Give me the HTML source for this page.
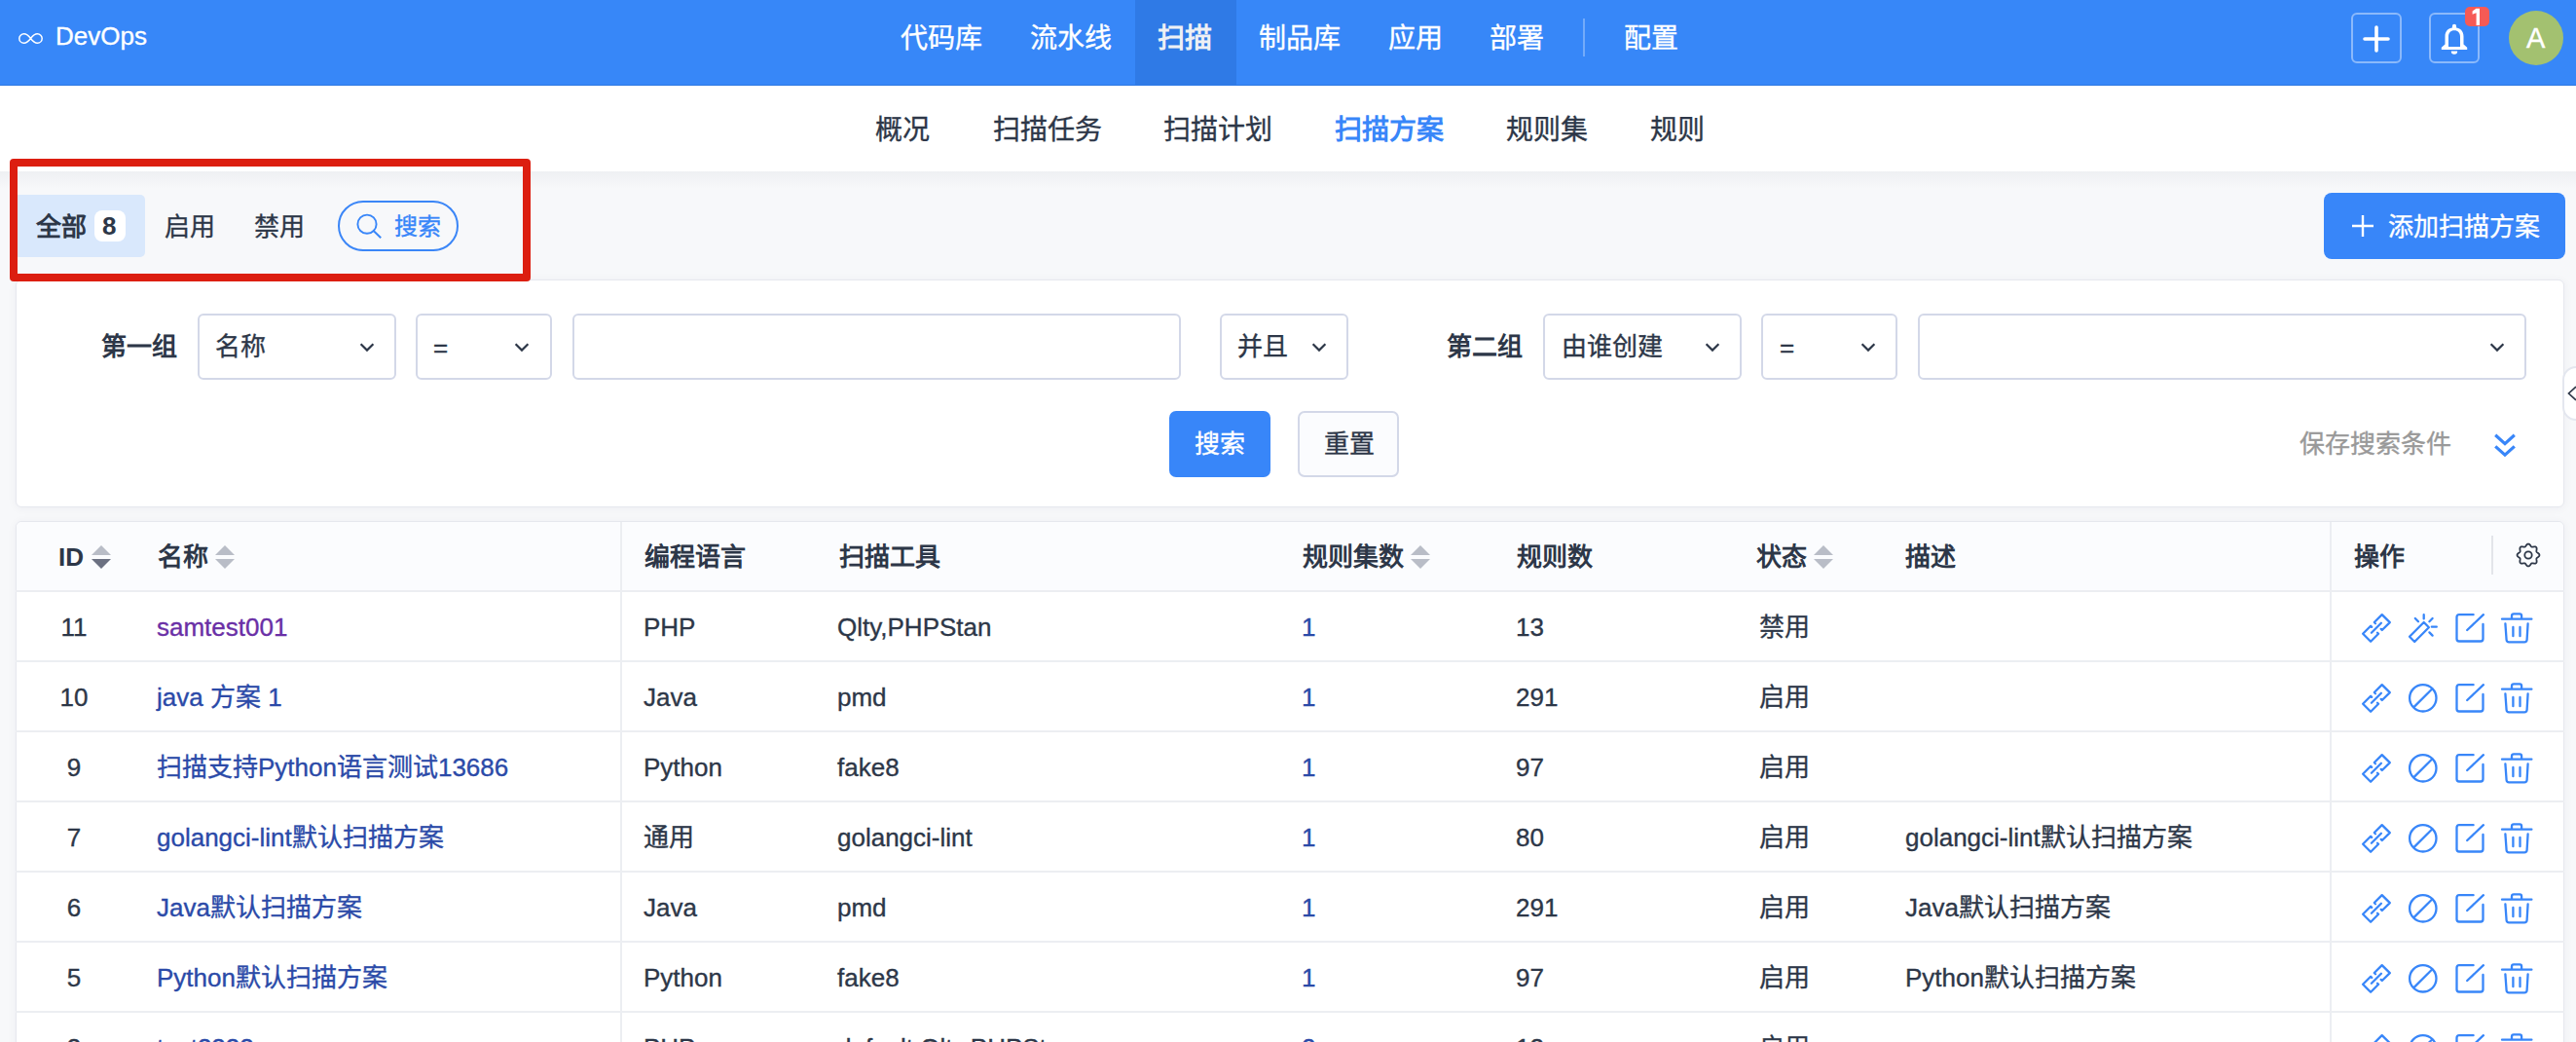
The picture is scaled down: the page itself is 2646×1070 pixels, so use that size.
<!DOCTYPE html>
<html lang="zh-CN">
<head>
<meta charset="utf-8">
<style>
*{box-sizing:border-box;margin:0;padding:0}
html,body{width:2646px;height:1070px;overflow:hidden}
body{position:relative;background:#f7f8fa;font-family:"Liberation Sans",sans-serif;color:#2d3748}
.a{position:absolute}
.t{position:absolute;white-space:nowrap;line-height:1;-webkit-text-stroke:0.35px currentColor}
svg{position:absolute;overflow:visible}
#hdr{left:0;top:0;width:2646px;height:88px;background:#3787f8;border-bottom:1px solid #2f79e2}
.nav{font-size:28px;color:#fff;top:26px}
#sub{left:0;top:88px;width:2646px;height:88px;background:#fff}
.snav{font-size:28px;color:#2d3748;top:120px}
#shadow{left:0;top:176px;width:2646px;height:18px;background:linear-gradient(#eef0f3,#f7f8fa)}
.f26{font-size:26px}
.card{background:#fff;border:1px solid #e6e8ee;border-radius:6px;box-shadow:0 1px 10px rgba(30,40,70,.05)}
.sel{background:#fff;border:2px solid #d3d8e8;border-radius:6px;top:322px;height:68px}
.lbl{font-size:26px;font-weight:bold;color:#2d3748;top:343px}
.stx{font-size:26px;color:#2d3748;top:343px}
.th{font-size:26px;font-weight:bold;color:#2d3748}
.td{font-size:26px;color:#2d3748}
.lk{color:#2b4aa8}
.hl{left:16px;width:2618px;height:2px;background:#eceef2}
.th,.lbl,.bd{-webkit-text-stroke:0}
</style>
</head>
<body>
<div id="hdr" class="a"></div>
<svg style="left:19px;top:34px" width="25" height="11" viewBox="0 0 25 11"><path d="M12.5 5.5 C10 2.2,7.8 0.8,5.6 0.8 A4.8 4.7 0 0 0 5.6 10.2 C7.8 10.2,10 8.8,12.5 5.5 C15 2.2,17.2 0.8,19.4 0.8 A4.8 4.7 0 0 1 19.4 10.2 C17.2 10.2,15 8.8,12.5 5.5Z" fill="none" stroke="#fff" stroke-width="1.5"/></svg>
<div class="t" style="left:57px;top:24px;font-size:26px;color:#fff">DevOps</div>
<div class="a" style="left:1166px;top:0;width:104px;height:88px;background:#2f7ae6"></div>
<div class="t nav" style="left:925px">代码库</div>
<div class="t nav" style="left:1058px">流水线</div>
<div class="t nav" style="left:1189px;color:#eef0f4;font-weight:bold;-webkit-text-stroke:0">扫描</div>
<div class="t nav" style="left:1293px">制品库</div>
<div class="t nav" style="left:1426px">应用</div>
<div class="t nav" style="left:1530px">部署</div>
<div class="t nav" style="left:1668px">配置</div>
<div class="a" style="left:1626px;top:19px;width:2px;height:39px;background:rgba(255,255,255,.3)"></div>
<div class="a" style="left:2415px;top:13px;width:52px;height:52px;border:2px solid rgba(255,255,255,.42);border-radius:6px"></div>
<svg style="left:2427px;top:26px" width="28" height="28" viewBox="0 0 28 28"><path d="M14 2V26M2 14H26" stroke="#fff" stroke-width="3.6" stroke-linecap="round"/></svg>
<div class="a" style="left:2495px;top:13px;width:52px;height:52px;border:2px solid rgba(255,255,255,.42);border-radius:6px"></div>
<svg style="left:2500px;top:20px" width="45" height="40" viewBox="0 0 45 40"><path fill="#fff" fill-rule="evenodd" d="M11.5 17.6C11.5 11.8 14.8 8.2 21 8.2C27.2 8.2 30.5 11.8 30.5 17.6V25.6L34.2 28.8V30.9H7.8V28.8L11.5 25.6Z M15 17.8C15 13.8 17.2 11.3 21 11.3C24.8 11.3 27 13.8 27 17.8V27.9H15Z"/><path fill="#fff" d="M18.9 9V6.9A2.1 2.1 0 0 1 23.1 6.9V9Z M17.8 32.6H24.2A3.2 3.2 0 0 1 17.8 32.6Z"/></svg>
<div class="a" style="left:2532px;top:7px;width:25px;height:20px;background:#f65a55;border-radius:5px"></div>
<svg style="left:2539px;top:8px" width="9" height="19" viewBox="0 0 9 19"><path d="M4.4 0.7H8V17.9H4.6V5.3L0.6 6.7V3.6Z" fill="#fff"/></svg>
<div class="a" style="left:2577px;top:11px;width:56px;height:56px;border-radius:50%;background:#a3c170"></div>
<div class="t" style="left:2595px;top:25px;font-size:29px;color:#fff">A</div>
<div id="sub" class="a"></div>
<div class="t snav" style="left:899px">概况</div>
<div class="t snav" style="left:1020px">扫描任务</div>
<div class="t snav" style="left:1195px">扫描计划</div>
<div class="t snav" style="left:1371px;color:#3886f9;font-weight:bold;-webkit-text-stroke:0">扫描方案</div>
<div class="t snav" style="left:1547px">规则集</div>
<div class="t snav" style="left:1695px">规则</div>
<div id="shadow" class="a"></div>
<div class="a" style="left:14px;top:200px;width:135px;height:64px;background:#d9e8fc;border-radius:5px"></div>
<div class="t f26" style="left:37px;top:220px;font-weight:bold;-webkit-text-stroke:0">全部</div>
<div class="a" style="left:97px;top:216px;width:32px;height:32px;background:#fff;border-radius:8px"></div>
<div class="t f26" style="left:105px;top:219px;font-weight:bold;-webkit-text-stroke:0">8</div>
<div class="t f26" style="left:169px;top:220px">启用</div>
<div class="t f26" style="left:261px;top:220px">禁用</div>
<div class="a" style="left:347px;top:206px;width:124px;height:52px;border:2px solid #3b86f7;border-radius:26px"></div>
<svg style="left:365px;top:219px" width="28" height="28" viewBox="0 0 28 28"><circle cx="12" cy="11.2" r="9.6" fill="none" stroke="#3886f9" stroke-width="1.9"/><path d="M18.9 18.2L25.5 24.6" stroke="#3886f9" stroke-width="2" stroke-linecap="square"/></svg>
<div class="t" style="left:405px;top:221px;font-size:24px;color:#3886f9">搜索</div>
<div class="a" style="left:2387px;top:198px;width:248px;height:68px;background:#3886f9;border-radius:8px"></div>
<svg style="left:2416px;top:221px" width="22" height="22" viewBox="0 0 22 22"><path d="M11 0V22M0 11H22" stroke="#fff" stroke-width="2.4"/></svg>
<div class="t f26" style="left:2453px;top:220px;color:#fff">添加扫描方案</div>
<div class="a card" style="left:16px;top:287px;width:2618px;height:234px"></div>
<div class="t lbl" style="left:104px">第一组</div>
<div class="a sel" style="left:203px;width:204px"></div>
<div class="t stx" style="left:221px">名称</div>
<svg style="left:369px;top:352px" width="16" height="10" viewBox="0 0 16 10"><path d="M1.6 1.2L8 7.6L14.4 1.2" fill="none" stroke="#2d3748" stroke-width="2.2" stroke-linejoin="miter"/></svg>
<div class="a sel" style="left:427px;width:140px"></div>
<div class="t stx" style="left:445px;top:344px">=</div>
<svg style="left:528px;top:352px" width="16" height="10" viewBox="0 0 16 10"><path d="M1.6 1.2L8 7.6L14.4 1.2" fill="none" stroke="#2d3748" stroke-width="2.2" stroke-linejoin="miter"/></svg>
<div class="a sel" style="left:588px;width:625px"></div>
<div class="a sel" style="left:1253px;width:132px"></div>
<div class="t stx" style="left:1271px">并且</div>
<svg style="left:1347px;top:352px" width="16" height="10" viewBox="0 0 16 10"><path d="M1.6 1.2L8 7.6L14.4 1.2" fill="none" stroke="#2d3748" stroke-width="2.2" stroke-linejoin="miter"/></svg>
<div class="t lbl" style="left:1486px">第二组</div>
<div class="a sel" style="left:1585px;width:204px"></div>
<div class="t stx" style="left:1604px">由谁创建</div>
<svg style="left:1751px;top:352px" width="16" height="10" viewBox="0 0 16 10"><path d="M1.6 1.2L8 7.6L14.4 1.2" fill="none" stroke="#2d3748" stroke-width="2.2" stroke-linejoin="miter"/></svg>
<div class="a sel" style="left:1809px;width:140px"></div>
<div class="t stx" style="left:1828px;top:344px">=</div>
<svg style="left:1911px;top:352px" width="16" height="10" viewBox="0 0 16 10"><path d="M1.6 1.2L8 7.6L14.4 1.2" fill="none" stroke="#2d3748" stroke-width="2.2" stroke-linejoin="miter"/></svg>
<div class="a sel" style="left:1970px;width:625px"></div>
<svg style="left:2557px;top:352px" width="16" height="10" viewBox="0 0 16 10"><path d="M1.6 1.2L8 7.6L14.4 1.2" fill="none" stroke="#2d3748" stroke-width="2.2" stroke-linejoin="miter"/></svg>
<div class="a" style="left:1201px;top:422px;width:104px;height:68px;background:#3886f9;border-radius:7px"></div>
<div class="t f26" style="left:1227px;top:443px;color:#fff">搜索</div>
<div class="a" style="left:1333px;top:422px;width:104px;height:68px;background:#fbfcfe;border:2px solid #d3d8e8;border-radius:7px"></div>
<div class="t f26" style="left:1360px;top:443px">重置</div>
<div class="t f26" style="left:2362px;top:443px;color:#999">保存搜索条件</div>
<svg style="left:2562px;top:445px" width="22" height="24" viewBox="0 0 22 24"><path d="M1.2 1.8L11 10.6L20.8 1.8M1.2 13.4L11 22.2L20.8 13.4" fill="none" stroke="#3886f9" stroke-width="3.2"/></svg>
<div class="a" style="left:2632px;top:376px;width:30px;height:56px;background:#fff;border:2px solid #e4e7ef;border-radius:14px"></div>
<svg style="left:2637px;top:396px" width="12" height="16" viewBox="0 0 12 16"><path d="M9 1L1.5 8L9 15" fill="none" stroke="#2d3748" stroke-width="1.7"/></svg>
<div class="a card" style="left:16px;top:535px;width:2618px;height:600px"></div>
<div class="a" style="left:17px;top:536px;width:2616px;height:70px;background:#fbfcfe;border-radius:6px 6px 0 0"></div>
<div class="a hl" style="top:606px"></div>
<div class="a hl" style="top:678px"></div>
<div class="a hl" style="top:750px"></div>
<div class="a hl" style="top:822px"></div>
<div class="a hl" style="top:894px"></div>
<div class="a hl" style="top:966px"></div>
<div class="a hl" style="top:1038px"></div>
<div class="a hl" style="top:1110px"></div>
<div class="a" style="left:637px;top:536px;width:2px;height:540px;background:#eceef2"></div>
<div class="a" style="left:2393px;top:536px;width:2px;height:540px;background:#eceef2"></div>
<div class="a" style="left:2559px;top:550px;width:2px;height:40px;background:#e3e5ea"></div>
<div class="t th" style="left:60px;top:559px">ID</div>
<svg style="left:94px;top:560px" width="20" height="24" viewBox="0 0 20 24"><path d="M10 0L20 10H0Z" fill="#b9bdc7"/><path d="M0 14H20L10 24Z" fill="#6b7081"/></svg>
<div class="t th" style="left:162px;top:559px">名称</div>
<svg style="left:221px;top:560px" width="20" height="24" viewBox="0 0 20 24"><path d="M10 0L20 10H0Z" fill="#b9bdc7"/><path d="M0 14H20L10 24Z" fill="#b9bdc7"/></svg>
<div class="t th" style="left:662px;top:559px">编程语言</div>
<div class="t th" style="left:862px;top:559px">扫描工具</div>
<div class="t th" style="left:1338px;top:559px">规则集数</div>
<svg style="left:1449px;top:560px" width="20" height="24" viewBox="0 0 20 24"><path d="M10 0L20 10H0Z" fill="#b9bdc7"/><path d="M0 14H20L10 24Z" fill="#b9bdc7"/></svg>
<div class="t th" style="left:1558px;top:559px">规则数</div>
<div class="t th" style="left:1804px;top:559px">状态</div>
<svg style="left:1863px;top:560px" width="20" height="24" viewBox="0 0 20 24"><path d="M10 0L20 10H0Z" fill="#b9bdc7"/><path d="M0 14H20L10 24Z" fill="#b9bdc7"/></svg>
<div class="t th" style="left:1957px;top:559px">描述</div>
<div class="t th" style="left:2418px;top:559px">操作</div>
<svg style="left:2584px;top:557px" width="26" height="26" viewBox="0 0 26 26" fill="none" stroke="#2d3748" stroke-width="1.8"><path d="M13.00 1.55 L13.45 1.62 L13.88 1.80 L14.29 2.10 L14.67 2.48 L15.01 2.90 L15.32 3.33 L15.61 3.74 L15.90 4.09 L16.19 4.36 L16.50 4.55 L16.85 4.64 L17.25 4.65 L17.70 4.60 L18.20 4.52 L18.72 4.44 L19.26 4.38 L19.80 4.38 L20.29 4.46 L20.73 4.63 L21.10 4.90 L21.37 5.27 L21.54 5.71 L21.62 6.20 L21.62 6.74 L21.56 7.28 L21.48 7.80 L21.40 8.30 L21.35 8.75 L21.36 9.15 L21.45 9.50 L21.64 9.81 L21.91 10.10 L22.26 10.39 L22.67 10.68 L23.10 10.99 L23.52 11.33 L23.90 11.71 L24.20 12.12 L24.38 12.55 L24.45 13.00 L24.38 13.45 L24.20 13.88 L23.90 14.29 L23.52 14.67 L23.10 15.01 L22.67 15.32 L22.26 15.61 L21.91 15.90 L21.64 16.19 L21.45 16.50 L21.36 16.85 L21.35 17.25 L21.40 17.70 L21.48 18.20 L21.56 18.72 L21.62 19.26 L21.62 19.80 L21.54 20.29 L21.37 20.73 L21.10 21.10 L20.73 21.37 L20.29 21.54 L19.80 21.62 L19.26 21.62 L18.72 21.56 L18.20 21.48 L17.70 21.40 L17.25 21.35 L16.85 21.36 L16.50 21.45 L16.19 21.64 L15.90 21.91 L15.61 22.26 L15.32 22.67 L15.01 23.10 L14.67 23.52 L14.29 23.90 L13.88 24.20 L13.45 24.38 L13.00 24.45 L12.55 24.38 L12.12 24.20 L11.71 23.90 L11.33 23.52 L10.99 23.10 L10.68 22.67 L10.39 22.26 L10.10 21.91 L9.81 21.64 L9.50 21.45 L9.15 21.36 L8.75 21.35 L8.30 21.40 L7.80 21.48 L7.28 21.56 L6.74 21.62 L6.20 21.62 L5.71 21.54 L5.27 21.37 L4.90 21.10 L4.63 20.73 L4.46 20.29 L4.38 19.80 L4.38 19.26 L4.44 18.72 L4.52 18.20 L4.60 17.70 L4.65 17.25 L4.64 16.85 L4.55 16.50 L4.36 16.19 L4.09 15.90 L3.74 15.61 L3.33 15.32 L2.90 15.01 L2.48 14.67 L2.10 14.29 L1.80 13.88 L1.62 13.45 L1.55 13.00 L1.62 12.55 L1.80 12.12 L2.10 11.71 L2.48 11.33 L2.90 10.99 L3.33 10.68 L3.74 10.39 L4.09 10.10 L4.36 9.81 L4.55 9.50 L4.64 9.15 L4.65 8.75 L4.60 8.30 L4.52 7.80 L4.44 7.28 L4.38 6.74 L4.38 6.20 L4.46 5.71 L4.63 5.27 L4.90 4.90 L5.27 4.63 L5.71 4.46 L6.20 4.38 L6.74 4.38 L7.28 4.44 L7.80 4.52 L8.30 4.60 L8.75 4.65 L9.15 4.64 L9.50 4.55 L9.81 4.36 L10.10 4.09 L10.39 3.74 L10.68 3.33 L10.99 2.90 L11.33 2.48 L11.71 2.10 L12.12 1.80 L12.55 1.62Z" stroke-linejoin="round"/><circle cx="13" cy="13" r="3.7"/></svg>
<div class="t td" style="left:36px;width:80px;text-align:center;top:631px">11</div>
<div class="t td" style="left:161px;top:631px;color:#6a2fa6">samtest001</div>
<div class="t td" style="left:661px;top:631px">PHP</div>
<div class="t td" style="left:860px;top:631px">Qlty,PHPStan</div>
<div class="t td lk" style="left:1337px;top:631px">1</div>
<div class="t td" style="left:1557px;top:631px">13</div>
<div class="t td" style="left:1807px;top:631px">禁用</div>
<svg style="left:2426px;top:630px" width="32" height="32" viewBox="0 0 32 32" fill="none" stroke="#3886f9" stroke-width="2.3" stroke-linecap="round" stroke-linejoin="round"><path d="M14 10.2L12.8 9L20.7 1.1L28.8 9.1L20.8 17L19.7 15.9M10.2 13.9L9.1 12.8L1.1 20.8L9.1 28.8L17.1 20.8L16 19.7M9.9 19.7L19.9 9.7"/></svg>
<svg style="left:2474px;top:630px" width="32" height="32" viewBox="0 0 32 32" fill="none" stroke="#3886f9" stroke-width="2.3" stroke-linecap="round" stroke-linejoin="round"><path d="M1 23.8L15.7 9L20.9 14.2L6.2 29Z M15.7 1.2V5.4 M6.8 5L10 8.2 M21.4 8.2L24.6 5 M23.8 13.7H28.8 M21.4 19.4L24.6 22.6"/></svg>
<svg style="left:2522px;top:630px" width="32" height="32" viewBox="0 0 32 32" fill="none" stroke="#3886f9" stroke-width="2.3" stroke-linecap="round" stroke-linejoin="round"><path d="M18.6 1.2H4Q1.5 1.2 1.5 3.7V26Q1.5 28.5 4 28.5H26Q28.5 28.5 28.5 26V11 M12.2 17L28.9 1.2"/></svg>
<svg style="left:2569px;top:629px" width="32" height="32" viewBox="0 0 32 32" fill="none" stroke="#3886f9" stroke-width="2.3" stroke-linecap="round" stroke-linejoin="round"><path d="M1 6.7H31.4 M11 6.7V3.4Q11 1.4 13 1.4H19.1Q21.1 1.4 21.1 3.4V6.7 M4.4 11.4L5.6 28Q5.8 30.4 8.2 30.4H24Q26.4 30.4 26.6 28L27.6 11.4 M12.4 15V24.2 M19.5 15V24.2"/></svg>
<div class="t td" style="left:36px;width:80px;text-align:center;top:703px">10</div>
<div class="t td" style="left:161px;top:703px;color:#2b4aa8">java 方案 1</div>
<div class="t td" style="left:661px;top:703px">Java</div>
<div class="t td" style="left:860px;top:703px">pmd</div>
<div class="t td lk" style="left:1337px;top:703px">1</div>
<div class="t td" style="left:1557px;top:703px">291</div>
<div class="t td" style="left:1807px;top:703px">启用</div>
<svg style="left:2426px;top:702px" width="32" height="32" viewBox="0 0 32 32" fill="none" stroke="#3886f9" stroke-width="2.3" stroke-linecap="round" stroke-linejoin="round"><path d="M14 10.2L12.8 9L20.7 1.1L28.8 9.1L20.8 17L19.7 15.9M10.2 13.9L9.1 12.8L1.1 20.8L9.1 28.8L17.1 20.8L16 19.7M9.9 19.7L19.9 9.7"/></svg>
<svg style="left:2474px;top:702px" width="32" height="32" viewBox="0 0 32 32" fill="none" stroke="#3886f9" stroke-width="2.3"><circle cx="14.8" cy="14.8" r="13.7"/><path d="M5.2 24.4L24.4 5.2"/></svg>
<svg style="left:2522px;top:702px" width="32" height="32" viewBox="0 0 32 32" fill="none" stroke="#3886f9" stroke-width="2.3" stroke-linecap="round" stroke-linejoin="round"><path d="M18.6 1.2H4Q1.5 1.2 1.5 3.7V26Q1.5 28.5 4 28.5H26Q28.5 28.5 28.5 26V11 M12.2 17L28.9 1.2"/></svg>
<svg style="left:2569px;top:701px" width="32" height="32" viewBox="0 0 32 32" fill="none" stroke="#3886f9" stroke-width="2.3" stroke-linecap="round" stroke-linejoin="round"><path d="M1 6.7H31.4 M11 6.7V3.4Q11 1.4 13 1.4H19.1Q21.1 1.4 21.1 3.4V6.7 M4.4 11.4L5.6 28Q5.8 30.4 8.2 30.4H24Q26.4 30.4 26.6 28L27.6 11.4 M12.4 15V24.2 M19.5 15V24.2"/></svg>
<div class="t td" style="left:36px;width:80px;text-align:center;top:775px">9</div>
<div class="t td" style="left:161px;top:775px;color:#2b4aa8">扫描支持Python语言测试13686</div>
<div class="t td" style="left:661px;top:775px">Python</div>
<div class="t td" style="left:860px;top:775px">fake8</div>
<div class="t td lk" style="left:1337px;top:775px">1</div>
<div class="t td" style="left:1557px;top:775px">97</div>
<div class="t td" style="left:1807px;top:775px">启用</div>
<svg style="left:2426px;top:774px" width="32" height="32" viewBox="0 0 32 32" fill="none" stroke="#3886f9" stroke-width="2.3" stroke-linecap="round" stroke-linejoin="round"><path d="M14 10.2L12.8 9L20.7 1.1L28.8 9.1L20.8 17L19.7 15.9M10.2 13.9L9.1 12.8L1.1 20.8L9.1 28.8L17.1 20.8L16 19.7M9.9 19.7L19.9 9.7"/></svg>
<svg style="left:2474px;top:774px" width="32" height="32" viewBox="0 0 32 32" fill="none" stroke="#3886f9" stroke-width="2.3"><circle cx="14.8" cy="14.8" r="13.7"/><path d="M5.2 24.4L24.4 5.2"/></svg>
<svg style="left:2522px;top:774px" width="32" height="32" viewBox="0 0 32 32" fill="none" stroke="#3886f9" stroke-width="2.3" stroke-linecap="round" stroke-linejoin="round"><path d="M18.6 1.2H4Q1.5 1.2 1.5 3.7V26Q1.5 28.5 4 28.5H26Q28.5 28.5 28.5 26V11 M12.2 17L28.9 1.2"/></svg>
<svg style="left:2569px;top:773px" width="32" height="32" viewBox="0 0 32 32" fill="none" stroke="#3886f9" stroke-width="2.3" stroke-linecap="round" stroke-linejoin="round"><path d="M1 6.7H31.4 M11 6.7V3.4Q11 1.4 13 1.4H19.1Q21.1 1.4 21.1 3.4V6.7 M4.4 11.4L5.6 28Q5.8 30.4 8.2 30.4H24Q26.4 30.4 26.6 28L27.6 11.4 M12.4 15V24.2 M19.5 15V24.2"/></svg>
<div class="t td" style="left:36px;width:80px;text-align:center;top:847px">7</div>
<div class="t td" style="left:161px;top:847px;color:#2b4aa8">golangci-lint默认扫描方案</div>
<div class="t td" style="left:661px;top:847px">通用</div>
<div class="t td" style="left:860px;top:847px">golangci-lint</div>
<div class="t td lk" style="left:1337px;top:847px">1</div>
<div class="t td" style="left:1557px;top:847px">80</div>
<div class="t td" style="left:1807px;top:847px">启用</div>
<div class="t td" style="left:1957px;top:847px">golangci-lint默认扫描方案</div>
<svg style="left:2426px;top:846px" width="32" height="32" viewBox="0 0 32 32" fill="none" stroke="#3886f9" stroke-width="2.3" stroke-linecap="round" stroke-linejoin="round"><path d="M14 10.2L12.8 9L20.7 1.1L28.8 9.1L20.8 17L19.7 15.9M10.2 13.9L9.1 12.8L1.1 20.8L9.1 28.8L17.1 20.8L16 19.7M9.9 19.7L19.9 9.7"/></svg>
<svg style="left:2474px;top:846px" width="32" height="32" viewBox="0 0 32 32" fill="none" stroke="#3886f9" stroke-width="2.3"><circle cx="14.8" cy="14.8" r="13.7"/><path d="M5.2 24.4L24.4 5.2"/></svg>
<svg style="left:2522px;top:846px" width="32" height="32" viewBox="0 0 32 32" fill="none" stroke="#3886f9" stroke-width="2.3" stroke-linecap="round" stroke-linejoin="round"><path d="M18.6 1.2H4Q1.5 1.2 1.5 3.7V26Q1.5 28.5 4 28.5H26Q28.5 28.5 28.5 26V11 M12.2 17L28.9 1.2"/></svg>
<svg style="left:2569px;top:845px" width="32" height="32" viewBox="0 0 32 32" fill="none" stroke="#3886f9" stroke-width="2.3" stroke-linecap="round" stroke-linejoin="round"><path d="M1 6.7H31.4 M11 6.7V3.4Q11 1.4 13 1.4H19.1Q21.1 1.4 21.1 3.4V6.7 M4.4 11.4L5.6 28Q5.8 30.4 8.2 30.4H24Q26.4 30.4 26.6 28L27.6 11.4 M12.4 15V24.2 M19.5 15V24.2"/></svg>
<div class="t td" style="left:36px;width:80px;text-align:center;top:919px">6</div>
<div class="t td" style="left:161px;top:919px;color:#2b4aa8">Java默认扫描方案</div>
<div class="t td" style="left:661px;top:919px">Java</div>
<div class="t td" style="left:860px;top:919px">pmd</div>
<div class="t td lk" style="left:1337px;top:919px">1</div>
<div class="t td" style="left:1557px;top:919px">291</div>
<div class="t td" style="left:1807px;top:919px">启用</div>
<div class="t td" style="left:1957px;top:919px">Java默认扫描方案</div>
<svg style="left:2426px;top:918px" width="32" height="32" viewBox="0 0 32 32" fill="none" stroke="#3886f9" stroke-width="2.3" stroke-linecap="round" stroke-linejoin="round"><path d="M14 10.2L12.8 9L20.7 1.1L28.8 9.1L20.8 17L19.7 15.9M10.2 13.9L9.1 12.8L1.1 20.8L9.1 28.8L17.1 20.8L16 19.7M9.9 19.7L19.9 9.7"/></svg>
<svg style="left:2474px;top:918px" width="32" height="32" viewBox="0 0 32 32" fill="none" stroke="#3886f9" stroke-width="2.3"><circle cx="14.8" cy="14.8" r="13.7"/><path d="M5.2 24.4L24.4 5.2"/></svg>
<svg style="left:2522px;top:918px" width="32" height="32" viewBox="0 0 32 32" fill="none" stroke="#3886f9" stroke-width="2.3" stroke-linecap="round" stroke-linejoin="round"><path d="M18.6 1.2H4Q1.5 1.2 1.5 3.7V26Q1.5 28.5 4 28.5H26Q28.5 28.5 28.5 26V11 M12.2 17L28.9 1.2"/></svg>
<svg style="left:2569px;top:917px" width="32" height="32" viewBox="0 0 32 32" fill="none" stroke="#3886f9" stroke-width="2.3" stroke-linecap="round" stroke-linejoin="round"><path d="M1 6.7H31.4 M11 6.7V3.4Q11 1.4 13 1.4H19.1Q21.1 1.4 21.1 3.4V6.7 M4.4 11.4L5.6 28Q5.8 30.4 8.2 30.4H24Q26.4 30.4 26.6 28L27.6 11.4 M12.4 15V24.2 M19.5 15V24.2"/></svg>
<div class="t td" style="left:36px;width:80px;text-align:center;top:991px">5</div>
<div class="t td" style="left:161px;top:991px;color:#2b4aa8">Python默认扫描方案</div>
<div class="t td" style="left:661px;top:991px">Python</div>
<div class="t td" style="left:860px;top:991px">fake8</div>
<div class="t td lk" style="left:1337px;top:991px">1</div>
<div class="t td" style="left:1557px;top:991px">97</div>
<div class="t td" style="left:1807px;top:991px">启用</div>
<div class="t td" style="left:1957px;top:991px">Python默认扫描方案</div>
<svg style="left:2426px;top:990px" width="32" height="32" viewBox="0 0 32 32" fill="none" stroke="#3886f9" stroke-width="2.3" stroke-linecap="round" stroke-linejoin="round"><path d="M14 10.2L12.8 9L20.7 1.1L28.8 9.1L20.8 17L19.7 15.9M10.2 13.9L9.1 12.8L1.1 20.8L9.1 28.8L17.1 20.8L16 19.7M9.9 19.7L19.9 9.7"/></svg>
<svg style="left:2474px;top:990px" width="32" height="32" viewBox="0 0 32 32" fill="none" stroke="#3886f9" stroke-width="2.3"><circle cx="14.8" cy="14.8" r="13.7"/><path d="M5.2 24.4L24.4 5.2"/></svg>
<svg style="left:2522px;top:990px" width="32" height="32" viewBox="0 0 32 32" fill="none" stroke="#3886f9" stroke-width="2.3" stroke-linecap="round" stroke-linejoin="round"><path d="M18.6 1.2H4Q1.5 1.2 1.5 3.7V26Q1.5 28.5 4 28.5H26Q28.5 28.5 28.5 26V11 M12.2 17L28.9 1.2"/></svg>
<svg style="left:2569px;top:989px" width="32" height="32" viewBox="0 0 32 32" fill="none" stroke="#3886f9" stroke-width="2.3" stroke-linecap="round" stroke-linejoin="round"><path d="M1 6.7H31.4 M11 6.7V3.4Q11 1.4 13 1.4H19.1Q21.1 1.4 21.1 3.4V6.7 M4.4 11.4L5.6 28Q5.8 30.4 8.2 30.4H24Q26.4 30.4 26.6 28L27.6 11.4 M12.4 15V24.2 M19.5 15V24.2"/></svg>
<div class="t td" style="left:36px;width:80px;text-align:center;top:1063px">3</div>
<div class="t td" style="left:161px;top:1063px;color:#2b4aa8">test3333</div>
<div class="t td" style="left:661px;top:1063px">PHP</div>
<div class="t td" style="left:860px;top:1063px">default,Qlty,PHPStan</div>
<div class="t td lk" style="left:1337px;top:1063px">2</div>
<div class="t td" style="left:1557px;top:1063px">13</div>
<div class="t td" style="left:1807px;top:1063px">启用</div>
<svg style="left:2426px;top:1062px" width="32" height="32" viewBox="0 0 32 32" fill="none" stroke="#3886f9" stroke-width="2.3" stroke-linecap="round" stroke-linejoin="round"><path d="M14 10.2L12.8 9L20.7 1.1L28.8 9.1L20.8 17L19.7 15.9M10.2 13.9L9.1 12.8L1.1 20.8L9.1 28.8L17.1 20.8L16 19.7M9.9 19.7L19.9 9.7"/></svg>
<svg style="left:2474px;top:1062px" width="32" height="32" viewBox="0 0 32 32" fill="none" stroke="#3886f9" stroke-width="2.3"><circle cx="14.8" cy="14.8" r="13.7"/><path d="M5.2 24.4L24.4 5.2"/></svg>
<svg style="left:2522px;top:1062px" width="32" height="32" viewBox="0 0 32 32" fill="none" stroke="#3886f9" stroke-width="2.3" stroke-linecap="round" stroke-linejoin="round"><path d="M18.6 1.2H4Q1.5 1.2 1.5 3.7V26Q1.5 28.5 4 28.5H26Q28.5 28.5 28.5 26V11 M12.2 17L28.9 1.2"/></svg>
<svg style="left:2569px;top:1061px" width="32" height="32" viewBox="0 0 32 32" fill="none" stroke="#3886f9" stroke-width="2.3" stroke-linecap="round" stroke-linejoin="round"><path d="M1 6.7H31.4 M11 6.7V3.4Q11 1.4 13 1.4H19.1Q21.1 1.4 21.1 3.4V6.7 M4.4 11.4L5.6 28Q5.8 30.4 8.2 30.4H24Q26.4 30.4 26.6 28L27.6 11.4 M12.4 15V24.2 M19.5 15V24.2"/></svg>
<div class="a" style="left:10px;top:163px;width:535px;height:126px;border:8px solid #dc1e10;border-radius:4px"></div>
</body>
</html>
